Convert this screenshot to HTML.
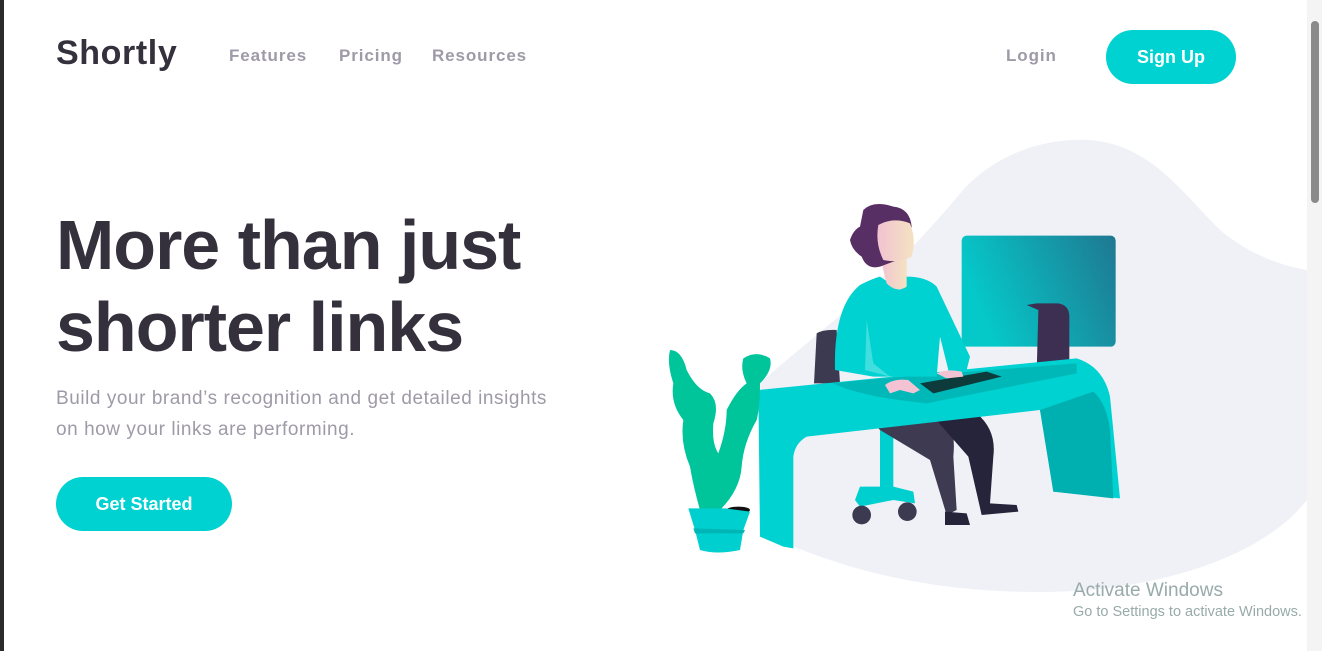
<!DOCTYPE html>
<html><head><meta charset="utf-8"><style>
*{margin:0;padding:0;box-sizing:border-box}
html,body{width:1322px;height:651px;overflow:hidden;background:#fff;font-family:"Liberation Sans",sans-serif}
.frame{position:absolute;left:0;top:0;width:4px;height:651px;background:#2b2b2b}
.sb{position:absolute;right:0;top:0;width:15px;height:651px;background:#f4f4f4}
.thumb{position:absolute;left:4px;top:21px;width:8px;height:182px;background:#8a8a8a;border-radius:4px}
.logo{position:absolute;left:56px;top:34px;font-size:34px;font-weight:bold;color:#34313d;letter-spacing:0.6px}
.nav{position:absolute;top:46px;font-size:17px;font-weight:bold;color:#9e9aa7;letter-spacing:0.9px}
.btn{position:absolute;background:#00d1d1;color:#fff;font-weight:bold;text-align:center;border-radius:30px}
h1{position:absolute;left:56px;top:204px;font-size:70px;line-height:82px;color:#34313d;letter-spacing:-1px;font-weight:bold}
p{position:absolute;left:56px;top:383px;font-size:19px;line-height:31px;color:#9e9aa7;letter-spacing:0.55px}
.wm{position:absolute;left:1073px;color:#9aa;font-family:"Liberation Sans",sans-serif}
</style></head><body>
<svg width="1322" height="651" style="position:absolute;left:0;top:0">
<defs>
<linearGradient id="mg" x1="0" x2="1" y1="0.3" y2="0"><stop offset="0" stop-color="#05c9c9"/><stop offset="1" stop-color="#1f7892"/></linearGradient>
<linearGradient id="fg" x1="0" x2="1"><stop offset="0" stop-color="#f2c3d2"/><stop offset="1" stop-color="#f4e2c2"/></linearGradient>
</defs>
<path fill="#eff1f7" d="M963 190 C1000 150 1050 138 1090 140 C1150 145 1180 190 1220 230 C1250 255 1280 265 1307 270 L1307 500 C1260 560 1150 592 1040 592 C930 592 850 570 790 545 L760 383 C820 330 880 290 963 190 Z"/>
<g transform="translate(660,190) scale(0.33333)">
<rect x="905" y="137" width="462" height="333" rx="15" fill="url(#mg)"/>
<path fill="#3d2f52" d="M1100 345 L1130 340 L1195 340 Q1228 345 1228 380 L1228 560 L1130 565 L1100 555 L1130 550 L1135 360 Z"/>
<path fill="#3b3a50" d="M470 430 Q490 418 530 420 L540 580 L462 580 Z"/>
<path fill="#00cfcf" d="M660 720 L700 720 L700 890 L760 905 L765 940 L700 930 L600 950 L585 930 L600 890 L660 890 Z"/>
<circle cx="605" cy="975" r="28" fill="#3b3a50"/><circle cx="742" cy="965" r="28" fill="#3b3a50"/>
<path fill="#3e3a52" d="M640 700 L840 680 Q890 700 880 800 L890 960 L860 975 L810 810 L660 720 Z"/>
<path fill="#26243a" d="M820 680 L950 670 Q1010 720 1000 800 L990 940 L1070 945 L1075 965 L965 975 L925 800 Z"/>
<path fill="#26243a" d="M855 965 L920 970 L930 1005 L855 1005 Z"/>
<path fill="#00d1d1" d="M295 600 L1250 505 Q1330 530 1350 620 L1380 925 L1180 905 L1140 660 L440 740 Q405 760 400 800 L400 1075 L370 1070 L300 1040 Z"/>
<path fill="#00b0b0" d="M1140 660 L1300 605 Q1340 640 1350 720 L1360 925 L1180 905 Z"/>
<path fill="#00b8b8" d="M520 580 Q700 560 1000 540 L1250 520 L1250 550 Q1000 600 800 640 Q600 620 520 580 Z"/>
<path fill="#00d1d1" d="M525 540 Q520 350 600 285 Q640 265 660 260 L720 300 L740 260 Q800 260 830 290 L930 500 L920 540 L870 560 L840 440 L830 560 L640 560 Z"/>
<path fill="#40dede" d="M620 390 L640 520 L690 560 L615 540 Z"/>
<path fill="url(#fg)" d="M660 200 L740 200 L740 290 Q710 310 680 280 Z"/>
<path fill="#582f64" d="M610 60 Q640 30 700 50 Q750 55 755 110 L740 200 L660 230 Q620 240 605 200 Q575 180 570 150 Q580 120 600 110 Z"/>
<path fill="url(#fg)" d="M655 105 Q700 80 750 100 Q770 150 755 200 Q720 220 670 210 Q645 160 655 105 Z"/>
<path fill="#0d3b3b" d="M780 580 L980 545 L1025 560 L820 610 Z"/>
<path fill="#f4c3d3" d="M675 585 Q700 565 745 570 L780 600 L760 610 L720 600 L690 610 Z M830 550 Q860 535 905 545 L910 560 L860 565 Z"/>
<path fill="#00c49a" d="M30 480 Q65 480 80 540 Q110 600 150 610 Q180 640 160 700 Q155 760 175 790 Q200 720 200 660 Q230 600 260 580 Q240 540 250 505 Q290 480 330 505 Q340 540 300 580 Q300 650 290 690 Q250 760 245 830 Q240 900 180 960 L120 960 Q100 890 90 830 Q60 760 70 690 Q30 640 40 580 Q20 520 30 480 Z"/>
<ellipse cx="235" cy="960" rx="35" ry="10" fill="#111"/>
<path fill="#00cfcf" d="M85 955 L195 955 L270 965 L250 1020 L240 1080 Q170 1095 120 1080 L105 1020 Z"/>
<path fill="#00b5b5" d="M100 1015 L255 1020 L250 1030 L105 1030 Z"/>
</g>
</svg>
<div class="frame"></div>
<div class="logo">Shortly</div>
<div class="nav" style="left:229px">Features</div>
<div class="nav" style="left:339px">Pricing</div>
<div class="nav" style="left:432px">Resources</div>
<div class="nav" style="left:1006px">Login</div>
<div class="btn" style="left:1106px;top:30px;width:130px;height:54px;line-height:54px;font-size:18px">Sign Up</div>
<h1>More than just<br>shorter links</h1>
<p>Build your brand’s recognition and get detailed insights<br>on how your links are performing.</p>
<div class="btn" style="left:56px;top:477px;width:176px;height:54px;line-height:54px;font-size:18px">Get Started</div>
<div class="wm" style="top:580px;font-size:19px">Activate Windows</div>
<div class="wm" style="top:604px;font-size:14.5px">Go to Settings to activate Windows.</div>
<div class="sb"><div class="thumb"></div></div>
</body></html>
